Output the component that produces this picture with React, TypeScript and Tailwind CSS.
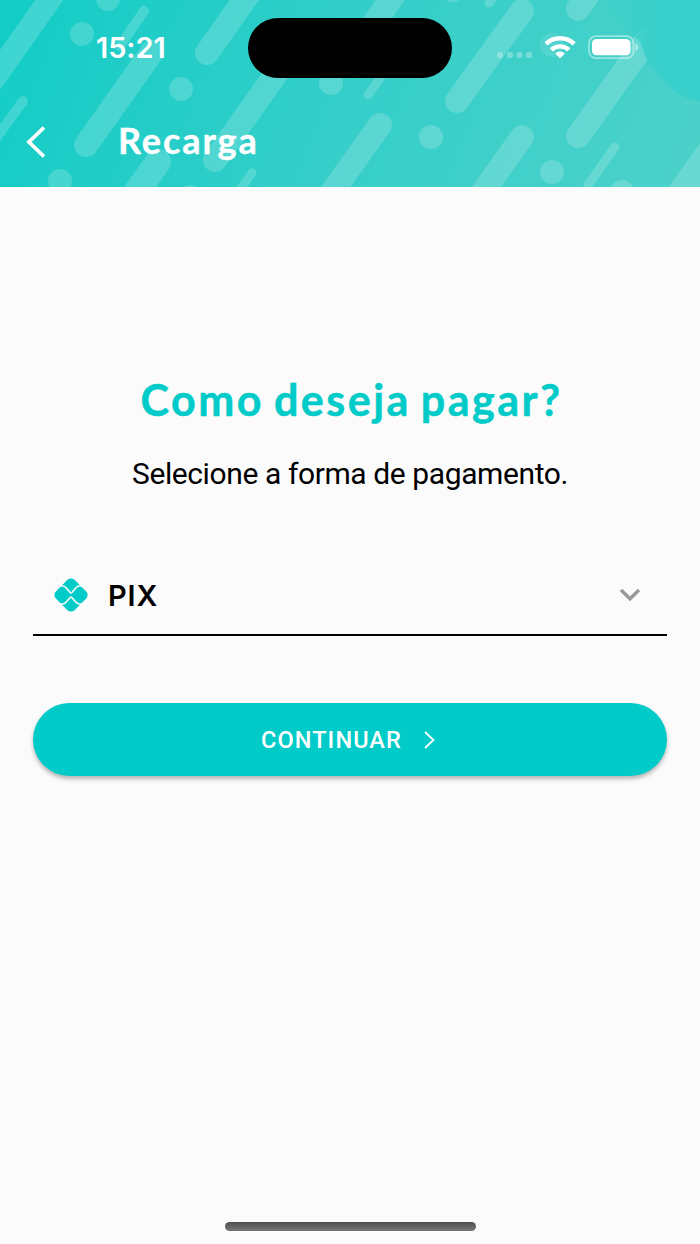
const streaks = [
  { x1: -12, y1: 87, x2: 62, y2: -18, w: 23 },
  { x1: 86, y1: 145, x2: 152, y2: 52, w: 24 },
  { x1: 207, y1: 53, x2: 252, y2: -11, w: 24 },
  { x1: 215, y1: 160, x2: 280, y2: 68, w: 24 },
  { x1: 365, y1: 36, x2: 400, y2: -14, w: 24 },
  { x1: 457, y1: 101, x2: 522, y2: 11, w: 24 },
  { x1: 578, y1: 9, x2: 594, y2: -14, w: 24 },
  { x1: 578, y1: 136, x2: 648, y2: 38, w: 24 },
  { x1: 380, y1: 125, x2: 322, y2: 206, w: 24 },
  { x1: 522, y1: 137, x2: 470, y2: 210, w: 24 },
  { x1: 158, y1: 162, x2: 125, y2: 208, w: 26 },
  { x1: 675, y1: 200, x2: 719, y2: 138, w: 25 },
  { x1: 144, y1: 11, x2: 120, y2: 46, w: 10 },
  { x1: 252, y1: 173, x2: 232, y2: 201, w: 9 },
  { x1: 23, y1: 101, x2: -6, y2: 141, w: 10 },
  { x1: 615, y1: 147, x2: 588, y2: 185, w: 9 },
  { x1: 368, y1: 95, x2: 388, y2: 67, w: 9 },
  { x1: 489, y1: 3, x2: 500, y2: -12, w: 9 },
]

const dots = [
  [108, -1], [82, 34], [181, 89], [60, 181], [331, 83], [431, 137],
  [552, 172], [622, 192], [453, -10], [190, 197],
]

export default function App() {
  return (
    <div className="flex flex-col h-[1244px] w-[700px] overflow-hidden bg-[#fbfbfb]">
      <header className="relative h-[187px] shrink-0 overflow-hidden">
        <HeaderPattern />
        <div className="relative flex h-[96px]">
          <div className="w-[248px] pl-[96px] pt-[27px] font-['Inter'] text-[29px] leading-[42px] font-semibold tracking-[-0.1px] text-white">15:21</div>
          <div className="mt-[18px] h-[60px] w-[204px] rounded-full bg-black" />
          <StatusIcons />
        </div>
        <div className="relative flex h-[91px] items-center">
          <button className="ml-[24px] w-[94px]">
            <svg width="24" height="36" viewBox="0 0 24 36" fill="none" stroke="white" strokeWidth="3.8">
              <path d="M20 3.500 5 18l15 14.500" />
            </svg>
          </button>
          <h1 className="pb-[3px] font-['Lato'] text-[36px] leading-[44px] font-bold tracking-[1.9px] text-white [-webkit-text-stroke:0.4px_white]">Recarga</h1>
        </div>
      </header>

      <main className="flex flex-1 flex-col px-[33px]">
        <h2 className="mt-[185px] pl-[3px] text-center font-['Lato'] text-[43px] leading-[56px] font-bold tracking-[2.5px] [word-spacing:-3px] whitespace-nowrap text-[#00cbc8] [-webkit-text-stroke:0.5px_#00cbc8]">Como deseja pagar?</h2>
        <p className="mt-[26px] text-center font-['Roboto'] text-[30px] leading-[40px] tracking-[-0.4px] whitespace-nowrap text-black">Selecione a forma de pagamento.</p>

        <button className="mt-[61px] flex h-[81px] items-center border-b-2 border-black pr-[26px] pl-[20px]">
          <PixIcon />
          <span className="ml-[19px] pt-[2px] font-['Inter'] text-[29px] font-semibold tracking-[0.9px] text-black">PIX</span>
          <svg className="ml-auto" width="22" height="14" viewBox="0 0 22 14" fill="none" stroke="#999999" strokeWidth="3.400">
            <path d="m2 2 9 8.800L20 2" />
          </svg>
        </button>

        <button className="mt-[67px] flex h-[73px] items-center justify-center rounded-full bg-[#00cbc8] pr-[2px] shadow-[0_3px_4px_rgba(0,0,0,0.28)]">
          <span className="pt-[2px] font-['Roboto'] text-[23.5px] font-medium tracking-[1.1px] text-white">CONTINUAR</span>
          <svg className="ml-[21px]" width="14" height="18" viewBox="0 0 14 18" fill="none" stroke="white" strokeWidth="1.800">
            <path d="m2 1 8.500 8L2 17" />
          </svg>
        </button>
      </main>

      <div className="mb-[13px] h-[9px] w-[251px] self-center rounded-full bg-linear-to-b from-[#505050] to-[#777777]" />
    </div>
  )
}

function HeaderPattern() {
  return (
    <svg className="absolute inset-0" width="700" height="187" viewBox="0 0 700 187">
      <defs>
        <linearGradient id="teal" gradientUnits="userSpaceOnUse" x1="0" y1="0" x2="650" y2="260">
          <stop offset="0" stopColor="#12ccc6" />
          <stop offset="0.5" stopColor="#34cec9" />
          <stop offset="1" stopColor="#4bd1ca" />
        </linearGradient>
        <linearGradient id="corner" gradientUnits="userSpaceOnUse" x1="600" y1="0" x2="650" y2="0">
          <stop offset="0" stopColor="#39cfca" stopOpacity="0" />
          <stop offset="1" stopColor="#39cfca" />
        </linearGradient>
      </defs>
      <rect width="700" height="187" fill="url(#teal)" />
      <g stroke="white" strokeOpacity="0.18" strokeLinecap="round">
        {streaks.map((s, i) => (
          <line key={i} x1={s.x1} y1={s.y1} x2={s.x2} y2={s.y2} strokeWidth={s.w} />
        ))}
      </g>
      <g fill="white" fillOpacity="0.18">
        {dots.map(([x, y]) => (
          <circle key={x} cx={x} cy={y} r="12" />
        ))}
      </g>
      <circle cx="552" cy="45" r="12" fill="white" fillOpacity="0.1" />
      <path d="M600 0C612 16 630 30 640 42L647 60C660 76 672 98 700 101V0Z" fill="url(#corner)" />
    </svg>
  )
}

function StatusIcons() {
  return (
    <svg className="ml-[44px] mt-[32px]" width="144" height="30" viewBox="496 32 144 30" fill="none">
      <g fill="white" fillOpacity="0.3">
        <rect x="497" y="52" width="6" height="6" rx="2" />
        <rect x="507" y="52" width="6" height="6" rx="2" />
        <rect x="516.500" y="52" width="6" height="6" rx="2" />
        <rect x="526" y="52" width="6" height="6" rx="2" />
      </g>
      <g stroke="white" strokeWidth="4.400">
        <path d="M546 43.800a20.500 20.500 0 0 1 28.200 0" />
        <path d="M551.300 49.800a13 13 0 0 1 17.600 0" />
      </g>
      <path d="M555.300 53.400a7.200 7.200 0 0 1 9.600 0L560.100 58.500Z" fill="white" />
      <rect x="589" y="36.200" width="44.500" height="22" rx="7" stroke="white" strokeOpacity="0.45" strokeWidth="1.800" />
      <rect x="592" y="39" width="38.500" height="16.200" rx="4.500" fill="white" />
      <path d="M635.500 43.500c3.300 1.200 3.300 6.300 0 7.500Z" fill="white" fillOpacity="0.5" />
    </svg>
  )
}

function PixIcon() {
  return (
    <svg width="36" height="36" viewBox="0 0 36 36">
      <rect x="4.800" y="4.800" width="26.400" height="26.400" rx="5" transform="rotate(45 18 18)" fill="#00cbc8" />
      <g fill="none" stroke="#fbfbfb" strokeWidth="1.600">
        <path d="M7 9H9.500C11 9 12 9.700 13 10.700L16.500 14.800Q18 17.300 19.500 14.800L23 10.700C24 9.700 25 9 26.500 9H29" />
        <path d="M7 27H9.500C11 27 12 26.300 13 25.300L16.500 21.200Q18 18.700 19.500 21.200L23 25.300C24 26.300 25 27 26.500 27H29" />
      </g>
    </svg>
  )
}
